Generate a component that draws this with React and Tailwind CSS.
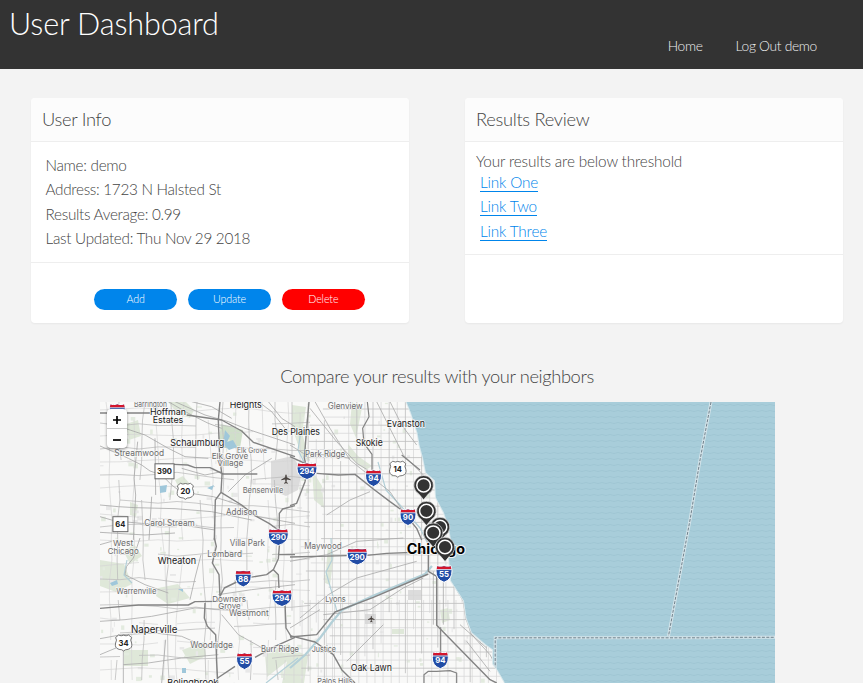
import React from "react";

const LATO = "font-['Lato',sans-serif]";

const COAST =
  "M405.5 402 L410 413 L416.5 433 L418.5 445 L422 458 L425 473 L434 481 L435 498 L443 513 L448 528 L450 540 L448 558 L450 581 L463 601 L465.5 618 L471 633 L485 645 L492 650 L492 664 L497 671 L504 683";

// Place labels: text, left, right, baseline, size, tone
const PLACES = [
  ["Barrington", 134, 167, 407, 8, "minor"],
  ["Hoffman", 150, 186, 414.8, 9, "major"],
  ["Estates", 152.7, 183.3, 422.6, 9, "major"],
  ["Schaumburg", 170.3, 224.3, 446, 9.2, "major"],
  ["Streamwood", 114.3, 164, 456.3, 8.4, "minor"],
  ["Heights", 229.7, 261.7, 408.3, 9.2, "major"],
  ["Elk Grove", 237, 267, 453, 7, "minor"],
  ["Elk Grove", 211.7, 248.3, 459, 8.2, "minor"],
  ["Village", 217.3, 243.3, 466, 8.2, "minor"],
  ["Bensenville", 242.7, 283.3, 493.2, 8, "minor"],
  ["Addison", 226, 257.3, 515, 8.4, "minor"],
  ["Carol Stream", 144.3, 194.7, 526.3, 8.4, "minor"],
  ["Des Plaines", 271.7, 320, 434.5, 9.2, "major"],
  ["Glenview", 327.7, 362.7, 408.7, 8.4, "minor"],
  ["Evanston", 386.7, 425, 427.3, 9.2, "major"],
  ["Skokie", 355.7, 382.7, 446.3, 9.2, "major"],
  ["Park Ridge", 305, 345, 457.3, 8.4, "minor"],
  ["West", 113, 133.3, 546.3, 8.2, "minor"],
  ["Chicago", 107.7, 138.7, 553.5, 8.2, "minor"],
  ["Wheaton", 157.7, 196, 563.8, 9.2, "major"],
  ["Villa Park", 229.7, 265, 546, 8.4, "minor"],
  ["Lombard", 207.3, 242, 557, 8.4, "minor"],
  ["Warrenville", 116.3, 156.3, 593.6, 8, "minor"],
  ["Downers", 212.3, 246, 602, 8.2, "minor"],
  ["Grove", 218.3, 240.7, 608.8, 8.2, "minor"],
  ["Westmont", 229, 268.7, 615.6, 8.4, "minor"],
  ["Naperville", 131, 177.3, 633.4, 10, "major"],
  ["Woodridge", 190.3, 232.7, 648.4, 8.4, "minor"],
  ["Burr Ridge", 261, 299, 651.6, 8.4, "minor"],
  ["Bolingbrook", 167.3, 218.3, 685.5, 9.2, "major"],
  ["Maywood", 304.3, 341.7, 548.8, 8.4, "minor"],
  ["Lyons", 325.3, 345.7, 602.3, 8.2, "minor"],
  ["Justice", 311.7, 336, 651.8, 8.2, "minor"],
  ["Oak Lawn", 350.7, 392, 670.8, 9.2, "major"],
  ["Palos Hills", 317.3, 352.7, 683.5, 8, "minor"],
  ["Chicago", 406.7, 465, 553.7, 14, "city"],
];

const TONES = {
  minor: { className: "fill-[#6c6c6c]", weight: 400, halo: 1.4 },
  major: { className: "fill-[#1a1a1a]", weight: 400, halo: 1.6 },
  city: { className: "fill-black", weight: 700, halo: 2 },
};

const INTERSTATES = [
  ["294", 307, 471], ["94", 373.5, 478], ["90", 408, 517], ["290", 278.3, 537],
  ["290", 357.2, 556.5], ["88", 243.2, 578.5], ["294", 282, 598], ["55", 244.5, 661],
  ["55", 444, 573.8], ["94", 440.3, 660.2], ["90", 117.3, 412],
];

const US_ROUTES = [["14", 397.8, 469.2], ["20", 185.4, 491.3], ["34", 123.6, 643]];
const STATE_ROUTES = [["390", 164.5, 471.3, 19], ["64", 120.4, 524.2, 15]];
const PINS = [[440, 527], [433.2, 532.7], [423.6, 485.2], [426.4, 511], [445, 547]];

function makeRandom(seed) {
  let s = seed;
  return () => {
    s = (s * 16807) % 2147483647;
    return s / 2147483647;
  };
}

function buildStreets() {
  const rnd = makeRandom(77);
  const fine = [];
  const mid = [];
  // Chicago side: regular half-mile grid
  for (let x = 292, i = 0; x < 500; x += 8.1, i++) {
    const top = x > 345 ? 402 : 402 + rnd() * 60;
    (i % 2 ? fine : mid).push(`M${x} ${top.toFixed(1)}V${(600 + rnd() * 83).toFixed(1)}`);
    fine.push(`M${x + 2} 600V683`);
  }
  for (let y = 409, i = 0; y < 683; y += 8.1, i++) {
    const left = 300 + rnd() * 35;
    (i % 2 ? fine : mid).push(`M${left.toFixed(1)} ${y}H505`);
  }
  // Western suburbs: looser, wandering roads
  for (let x = 106, i = 0; x < 300; x += 13, i++) {
    let d = `M${x} 402`;
    let cx = x;
    for (let y = 420; y <= 690; y += 20) {
      cx += (rnd() - 0.5) * 5;
      d += `${rnd() < 0.14 ? "M" : "L"}${cx.toFixed(1)} ${y}`;
    }
    (i % 2 ? mid : fine).push(d);
  }
  for (let y = 410, i = 0; y < 683; y += 13, i++) {
    let cy = y;
    let d = `M100 ${y}`;
    for (let x = 120; x <= 310; x += 19) {
      cy += (rnd() - 0.45) * 5;
      d += `${rnd() < 0.16 ? "M" : "L"}${x} ${cy.toFixed(1)}`;
    }
    (i % 2 ? mid : fine).push(d);
  }
  const specks = [];
  for (let i = 0; i < 330; i++) {
    const x = 100 + rnd() * 390;
    specks.push({
      x,
      y: 402 + rnd() * 281,
      w: 1 + rnd() * (x < 300 ? 5 : 3),
      h: 1 + rnd() * 4,
      green: rnd() < 0.6,
    });
  }
  return { fine: fine.join(""), mid: mid.join(""), specks };
}

const STREETS = buildStreets();

function MapText({ text, left, right, y, size, tone }) {
  const t = TONES[tone];
  return (
    <text
      x={left}
      y={y}
      textLength={right - left}
      lengthAdjust="spacingAndGlyphs"
      fontSize={size}
      fontWeight={t.weight}
      stroke="#fafafa"
      strokeOpacity="0.85"
      strokeWidth={t.halo}
      paintOrder="stroke"
      className={t.className}
    >
      {text}
    </text>
  );
}

function Interstate({ label, x, y }) {
  const w = label.length > 2 ? 10 : 8;
  return (
    <g transform={`translate(${x} ${y})`}>
      <path
        d={`M${-w + 1} -8 Q${-w / 2} -6.8 0 -8 Q${w / 2} -6.8 ${w - 1} -8 L${w} -3 Q${w + 0.3} 5.5 0 8.5 Q${-w - 0.3} 5.5 ${-w} -3Z`}
        fill="#214ca5"
        stroke="#fff"
        strokeWidth="1"
      />
      <path d={`M${-w + 1.2} -7.6 Q${-w / 2} -6.6 0 -7.6 Q${w / 2} -6.6 ${w - 1.2} -7.6 L${w - 0.6} -4.6H${-w + 0.6}Z`} fill="#d4152c" />
      <path d={`M${-w + 0.6} -4.2H${w - 0.6}`} stroke="#fff" strokeWidth=".8" />
      <text y="3.2" textAnchor="middle" fontSize="7.8" fontWeight="700" className="fill-white">
        {label}
      </text>
    </g>
  );
}

function UsRoute({ label, x, y }) {
  return (
    <g transform={`translate(${x} ${y})`}>
      <path
        d="M-5 -8 Q-2.5 -6.5 0 -7.8 Q2.5 -6.5 5 -8 L8 -5.5 Q6.2 -3 8 0 Q9.3 5 4.5 6.4 Q1.5 6.3 0 8 Q-1.5 6.3 -4.5 6.4 Q-9.3 5 -8 0 Q-6.2 -3 -8 -5.5Z"
        fill="#fff"
        stroke="#555"
        strokeWidth=".8"
      />
      <text y="2.8" textAnchor="middle" fontSize="7.6" fontWeight="700" className="fill-[#222]">
        {label}
      </text>
    </g>
  );
}

function StateRoute({ label, x, y, w }) {
  return (
    <g transform={`translate(${x} ${y})`}>
      <rect x={-w / 2} y="-7.5" width={w} height="15" fill="#fff" stroke="#666" strokeWidth="1" />
      <text y="2.8" textAnchor="middle" fontSize="7.6" fontWeight="700" className="fill-[#222]">
        {label}
      </text>
    </g>
  );
}

function Pin({ x, y }) {
  return (
    <g transform={`translate(${x} ${y})`}>
      <path d="M0 14.5 L-5 8.5 A9.8 9.8 0 1 1 5 8.5Z" fill="#333" stroke="#fff" strokeOpacity=".75" strokeWidth=".8" />
      <circle r="6.8" fill="#333" stroke="#fff" strokeWidth="1.5" />
    </g>
  );
}

function Plane({ x, y, s }) {
  return (
    <path
      transform={`translate(${x} ${y}) scale(${s})`}
      d="M0 -5 Q1 -4.5 .9 -1.8 L5 .4V1.4L.9 .6 .6 3.2 2 4.3V5L0 4.6 -2 5V4.3L-.6 3.2 -.9 .6 -5 1.4V.4L-.9 -1.8Q-1 -4.5 0 -5Z"
      fill="#4a4440"
    />
  );
}

// The highways are drawn in four quadrants, each on its own 3x local grid.
function Highways() {
  return (
    <g fill="none" strokeLinejoin="round">
      <g transform="translate(95 395) scale(.33333)">
        <g stroke="#a6a6a6" strokeWidth="2.4">
          <path d="M15 153 L60 172 100 190 140 210 165 228 200 240 230 270 250 285 300 297 355 305 435 330 490 365 600 385" />
          <path d="M15 330 L70 335 120 338 240 341 350 350 470 375M15 365 L60 378 140 385 260 390 360 405M15 412 L150 420 240 414" />
          <path d="M220 20 L280 55 340 85 380 100M240 20 L330 60 400 80 450 100 600 150M290 20 L350 35 410 70M380 230 L330 240 260 220M520 20 L560 70 600 95M490 20 L530 50 570 100" />
          <path d="M60 90 L90 100 150 120 220 160 270 185 340 190M128 140 L117 250 122 300 115 435M180 130 L182 300M170 305 L162 435M530 190 L450 240 400 290" />
        </g>
        <g stroke="#838383" strokeWidth="4.2">
          <path d="M15 54H165M275 60 L380 75 440 108 475 142 600 185" />
          <path d="M375 20 L370 75 374 190 381 240 378 292 361 315 358 435M237 208 L278 210 300 218 345 218 385 237H487" />
          <path d="M378 292 L440 330 480 362 522 385 550 405V435M600 332 L563 342 553 355V410" />
        </g>
      </g>
      <g transform="translate(290 395) scale(.33333)">
        <g stroke="#aaa" strokeWidth="2.4">
          <path d="M75 20 L120 100 180 195 230 235 300 290 360 380M260 20 L300 100 340 180 400 240M300 20 L335 90 380 150M60 40 L140 140 200 205 250 235" />
          <path d="M0 150 L40 175 110 180 180 190M110 360 L180 315 240 290" />
        </g>
        <g stroke="#838383" strokeWidth="4.2">
          <path d="M57 20 L50 100 43 190 52 225 45 260 20 325 0 332M0 185 L45 205M80 235 L145 240 195 238 250 282 300 320 335 345 380 400 395 435" />
          <path d="M232 20 L237 65 218 100 222 145 246 178V225M335 180 L390 225" strokeWidth="3.6" />
        </g>
      </g>
      <g transform="translate(95 538) scale(.33333)">
        <g stroke="#a8a8a8" strokeWidth="2.4">
          <path d="M15 20 L50 10M135 0 L115 60 95 85 90 110M318 50 L300 120 285 185M15 250 L90 245 170 235 300 210 400 215M15 302 L80 290 180 285 260 295 340 330M15 350 L75 325M85 380 L160 375 260 360 370 350" />
          <path d="M212 305 L205 380 200 435M85 435 V330M380 230 L430 290 520 340M370 170 L470 155 600 140M90 110 L150 140 220 165" />
        </g>
        <g stroke="#838383" strokeWidth="4.2">
          <path d="M15 211 L130 201 280 201 300 191 370 190M330 195 L328 240 337 265 362 290 365 370 368 435" />
          <path d="M358 0 L364 25 352 75 372 110 375 180M375 175 L388 150 425 132 465 118 515 110 535 95 550 62 555 0M535 95 L550 110 552 150M550 50 H600M570 195 L573 270 590 298M600 298 L540 325 480 358M420 385 L368 420" />
        </g>
      </g>
      <g transform="translate(290 538) scale(.33333)">
        <g stroke="#a8a8a8" strokeWidth="2.4">
          <path d="M0 70 L110 50 200 10 340 0M30 240 L115 170 200 120 380 70M100 230 L150 225 240 215 340 150 400 120M280 260 L210 330 170 370M0 270 L90 215M460 120 L460 260M430 100 V260" />
          <path d="M490 0 L478 50 485 130 520 190 527 240 545 290 600 350 645 435M510 260 L590 330M530 310 L600 400" />
        </g>
        <g stroke="#838383" strokeWidth="4.2">
          <path d="M0 57 L170 53M230 52 L290 46 400 42M415 0V100L440 115V262L600 425 620 435M415 108 L250 178 135 222 80 290 0 297M0 293 L75 312 130 350 155 395 195 435" />
          <path d="M452 268V345M402 435V410L415 400H440L480 398 500 405V435" strokeWidth="3.6" />
        </g>
      </g>
    </g>
  );
}

function NeighborMap() {
  return (
    <div className="relative mx-auto h-[281px] w-[675px] overflow-hidden bg-[#a8cdda]">
      <svg
        width="675"
        height="281"
        viewBox="100 402 675 281"
        className="block font-['Inter','Open_Sans',sans-serif]"
      >
        <defs>
          <pattern id="waves" width="8" height="6" patternUnits="userSpaceOnUse">
            <path d="M0 3 Q2 2 4 3 T8 3" fill="none" stroke="#9cc3d1" strokeWidth="1" strokeOpacity=".75" />
          </pattern>
          <clipPath id="land">
            <path d={`${COAST} H100 V402Z`} />
          </clipPath>
        </defs>
        <rect x="100" y="402" width="675" height="281" fill="#a8cdda" />
        <rect x="100" y="402" width="675" height="281" fill="url(#waves)" />
        <g fill="none">
          <path d="M711 402 L700 460 690 520 668.5 636M495.2 683V637.8H713V637.3H775" stroke="#d3e3e9" strokeWidth="3" />
          <path d="M711 402 L700 460 690 520 668.5 636M495.2 683V637.8H713V637.3H775" stroke="#71828c" strokeWidth="1" strokeDasharray="3 1.4" />
        </g>
        <path d={COAST} fill="none" stroke="#dbe9ed" strokeWidth="2" />
        <g clipPath="url(#land)">
          <rect x="100" y="402" width="420" height="281" fill="#f9f9f8" />
          <g fill="#dfe8d9">
            <path d="M221 424 L243 430 240 448 225 448 219 440Z" fill="#cfdfc9" />
            <path d="M168 402h18l8 8-4 8-12-4zM126 424l12-4 3 16-12 4zM130 502l8 3-2 12-6-2zM175 480l8-4 7 8-10 6zM100 560l24 4 8 20-16 8-16-6zM158 588l20-4 12 14-22 6-12-8zM124 650h24v16h-24zM182 650l22-8 2 14-16 8zM265 655l24-12 6 12-28 22zM290 648l18 8-4 27h-22zM124 552l10-8 8 12-12 8z" />
            <path d="M352 402l10 6-6 30-6-14zM312 470l10 16 2 22-10-8zM348 444l10 12 14 10-6 4-18-14zM292 405l14 2-4 26 8 28-8-4-10-30zM392 629h12v5h-12zM328 545l6 10-4 30-5-2zM440 610l8-2 2 12-8 3zM494 655l5 5v10l-5-6z" />
          </g>
          {STREETS.specks.map((s, i) => (
            <rect key={i} x={s.x} y={s.y} width={s.w} height={s.h} fill={s.green ? "#e3ebdf" : "#e8e8e8"} />
          ))}
          <path d="M271 461 L292 456 302 470 298 490 286 496 271 490Z" fill="#dcdcdc" />
          <path d="M365 614h11v10h-11zM408 590h13v10h-13zM433 520h8v16h-8z" fill="#dcdcdc" />
          <path d={STREETS.fine} fill="none" stroke="#d6d6d6" strokeWidth=".7" />
          <path d={STREETS.mid} fill="none" stroke="#bebebe" strokeWidth=".8" />
          <g fill="none" stroke="#b3d0d8" strokeLinejoin="round">
            <path d="M290 668 L305 655 320 638 332 622 342 610 375 595 425 574 432 566" strokeWidth="2.2" />
            <path d="M266 683 L285 668 298 658M378 462 L386 490 400 505 420 528 430 548M301 430 L298 450 308 470M331 538 L332 560 326 572 334 600 337 612M127 560 L124 575 132 583" strokeWidth="1.2" />
          </g>
          <path d="M225 430l5 6-3 6 6-2 4 7-8 3-6-6zM160 486l7-1-1 7-6 1zM207 488l7-3-2 5zM182 668h4v5h-4zM110 583l7-3 1 4-6 2zM178 589h5v3z" fill="#9fc7da" />
          <Highways />
          <Plane x={286} y={479} s={0.95} />
          <Plane x={371.3} y={619} s={0.65} />
        </g>
        {PLACES.map(([text, left, right, y, size, tone], i) => (
          <MapText key={i} text={text} left={left} right={right} y={y} size={size} tone={tone} />
        ))}
        {INTERSTATES.map(([label, x, y], i) => (
          <Interstate key={i} label={label} x={x} y={y} />
        ))}
        {US_ROUTES.map(([label, x, y]) => (
          <UsRoute key={label} label={label} x={x} y={y} />
        ))}
        {STATE_ROUTES.map(([label, x, y, w]) => (
          <StateRoute key={label} label={label} x={x} y={y} w={w} />
        ))}
        {PINS.map(([x, y], i) => (
          <Pin key={i} x={x} y={y} />
        ))}
      </svg>
      <div className="absolute left-[7px] top-[7px] flex w-5 flex-col rounded bg-white shadow-[0_1px_3px_rgba(0,0,0,0.45)]">
        <button aria-label="Zoom in" className="flex h-5 items-center justify-center border-b border-[#ccc] pt-[3px]">
          <svg width="8" height="8" viewBox="0 0 8 8"><path d="M4 0V8M0 4H8" stroke="#000" strokeWidth="1.7" /></svg>
        </button>
        <button aria-label="Zoom out" className="flex h-[19px] items-center justify-center pt-[3px]">
          <svg width="8" height="8" viewBox="0 0 8 8"><path d="M0 4H8" stroke="#000" strokeWidth="1.7" /></svg>
        </button>
      </div>
    </div>
  );
}

function Card({ title, children, footer }) {
  return (
    <section className="flex h-[225px] w-[378px] flex-col overflow-hidden rounded bg-white shadow-[0_1px_2px_rgba(0,0,0,0.05)]">
      <h3 className="flex h-11 items-center border-b border-[#eee] bg-[#fcfcfc] pl-[11px] text-[18.3px] font-light tracking-[-0.3px] text-[#444]">
        {title}
      </h3>
      {children}
      <div className="flex flex-1 justify-center gap-[10.5px] border-t border-[#eee] pl-[19px] pt-[26px]">{footer}</div>
    </section>
  );
}

function PillButton({ color, children }) {
  return (
    <button className={`h-[21px] w-[83.3px] rounded-full text-[10.7px] font-light tracking-[-0.1px] text-white ${color}`}>
      {children}
    </button>
  );
}

export default function App() {
  const links = ["Link One", "Link Two", "Link Three"];
  return (
    <div className={`h-[683px] overflow-hidden bg-[#f3f3f3] ${LATO}`}>
      <header className="flex h-[69px] justify-between bg-[#333] text-white">
        <h1 className="pl-[9px] pt-[5px] text-[30.6px] font-light leading-[38px] tracking-[-0.15px]">User Dashboard</h1>
        <nav className="flex gap-[33px] pr-[46px] pt-[36px] text-[13.8px] font-light leading-5 tracking-[-0.32px] text-[#f0f0f0]">
          <a>Home</a>
          <a>Log Out demo</a>
        </nav>
      </header>
      <main>
        <div className="flex justify-between pl-[31px] pr-5 pt-[29px]">
          <Card
            title="User Info"
            footer={
              <>
                <PillButton color="bg-[#0085eb]">Add</PillButton>
                <PillButton color="bg-[#0085eb]">Update</PillButton>
                <PillButton color="bg-[#ff0000]">Delete</PillButton>
              </>
            }
          >
            <div className="h-[120px] pl-[14.5px] pt-[11px] text-[15.3px] font-light leading-[24.4px] tracking-[-0.3px] text-[#444]">
              <p>Name: demo</p>
              <p>Address: 1723 N Halsted St</p>
              <p>Results Average: 0.99</p>
              <p>Last Updated: Thu Nov 29 2018</p>
            </div>
          </Card>
          <Card title="Results Review">
            <div className="h-[112px] pl-[11px] pt-2 text-[15.3px] font-light tracking-[-0.15px] text-[#444]">
              <p className="leading-[22px]">Your results are below threshold</p>
              <ul className="pl-1 pt-px leading-[24.4px] text-[#0085eb]">
                {links.map((l) => (
                  <li key={l} className="h-[24.4px]">
                    <a className="inline-block h-[19px] border-b border-[#0085eb] align-top leading-[19px]">{l}</a>
                  </li>
                ))}
              </ul>
            </div>
          </Card>
        </div>
        <h2 className="pt-[41px] text-center text-[18.3px] font-light leading-[24px] tracking-[-0.38px] text-[#444]">
          <span className="pl-[11px]">Compare your results with your neighbors</span>
        </h2>
        <div className="pl-3 pt-[14px]">
          <NeighborMap />
        </div>
      </main>
    </div>
  );
}
